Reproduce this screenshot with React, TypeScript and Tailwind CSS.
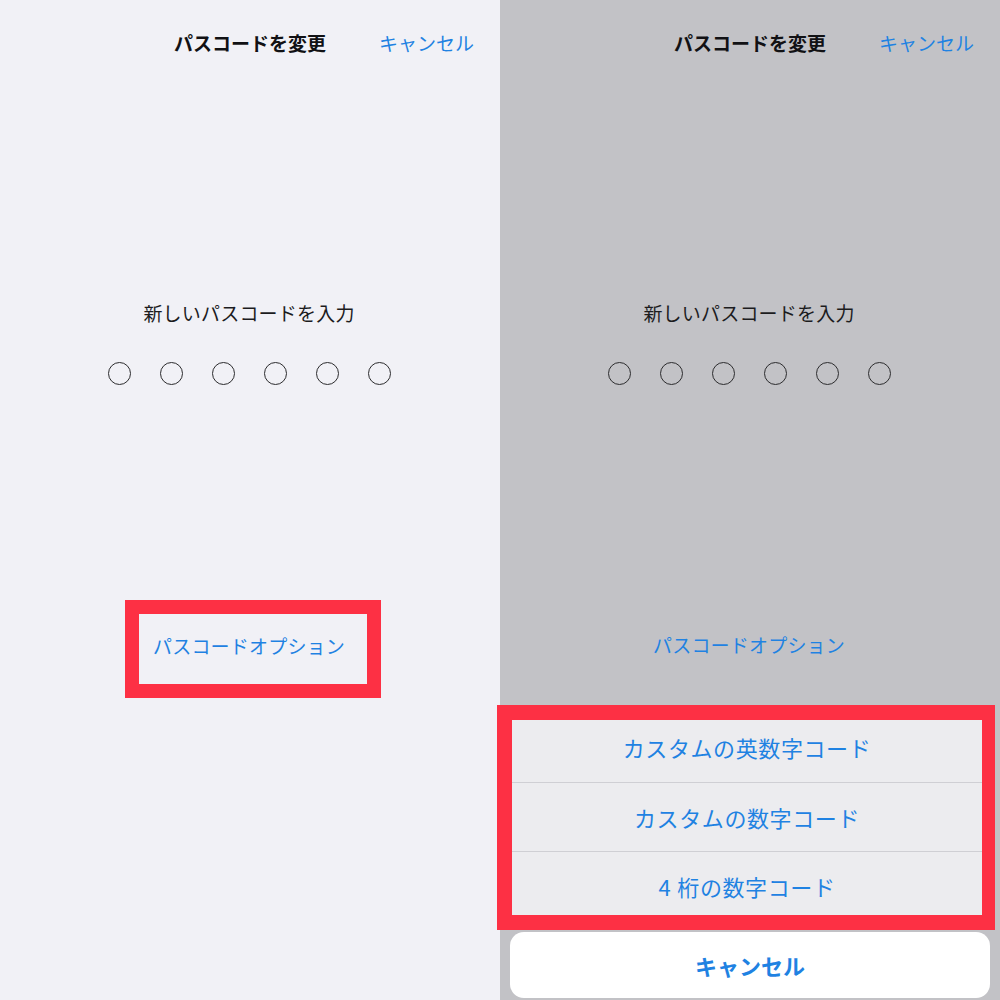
import React from 'react';

const font = { fontFamily: "'Noto Sans CJK JP', 'Noto Sans', sans-serif" };

const Header: React.FC = () => (
  <div className="grid h-[86px] grid-cols-[1fr_auto_1fr] items-center">
    <div />
    <h1 className="text-[19px] font-bold text-[#111114]">パスコードを変更</h1>
    <div className="justify-self-end pr-[26px] text-[19px] text-[#1f82e2]">キャンセル</div>
  </div>
);

const Dots: React.FC = () => (
  <div className="mt-[36px] flex justify-center gap-[29px] pr-[2px]">
    {[0, 1, 2, 3, 4, 5].map((i) => (
      <div key={i} className="h-[23px] w-[23px] rounded-full border-[1.75px] border-[#2c2c2e]" />
    ))}
  </div>
);

const Prompt: React.FC = () => (
  <p className="mt-[214px] pr-[2px] text-center text-[19px] leading-[26px] tracking-[0.2px] text-[#1c1c1e]">
    新しいパスコードを入力
  </p>
);

const sheetItems = ['カスタムの英数字コード', 'カスタムの数字コード', '4桁の数字コード'];

export default function App() {
  return (
    <div className="flex h-[1000px] w-[1000px] overflow-hidden" style={font}>
      {/* Left: before opening options */}
      <div className="flex h-full w-[500px] flex-col bg-[#f1f1f6]">
        <Header />
        <Prompt />
        <Dots />
        <div className="mx-auto mt-[215px] flex h-[98px] w-[256px] translate-x-[3px] items-center border-[14px] border-[#fd3044] pb-[6px] pl-[14px]">
          <span className="text-[19px] leading-[26px] tracking-[0.2px] text-[#1f82e2]">パスコードオプション</span>
        </div>
      </div>

      {/* Right: action sheet shown */}
      <div className="flex h-full w-[500px] flex-col bg-[#c2c2c6]">
        <Header />
        <Prompt />
        <Dots />
        <p className="mt-[247px] pr-[2px] text-center text-[19px] leading-[26px] tracking-[0.2px] text-[#1f82e2]">
          パスコードオプション
        </p>

        <div className="relative z-10 -ml-[3px] mt-[47px] w-[498px] border-y-[15px] border-l-[15px] border-r-[13px] border-[#fd3044]">
          <div className="h-[195px] overflow-hidden bg-[#ececef]">
            <div className="-mt-[7px]">
              {sheetItems.map((item, i) => (
                <div
                  key={item}
                  className={`flex h-[69px] items-center justify-center text-[22px] tracking-[0.6px] text-[#1f82e2] ${
                    i > 0 ? 'border-t border-[#cfcfd4]' : ''
                  }`}
                >
                  {item.startsWith('4') ? (
                    <>
                      <span className="mr-[6px]">4</span>
                      {item.slice(1)}
                    </>
                  ) : (
                    item
                  )}
                </div>
              ))}
            </div>
          </div>
        </div>

        <div className="ml-[10px] mt-[2px] flex h-[66px] w-[480px] items-center justify-center rounded-[14px] bg-white">
          <span className="text-[22px] font-bold text-[#1f82e2]">キャンセル</span>
        </div>
      </div>
    </div>
  );
}
